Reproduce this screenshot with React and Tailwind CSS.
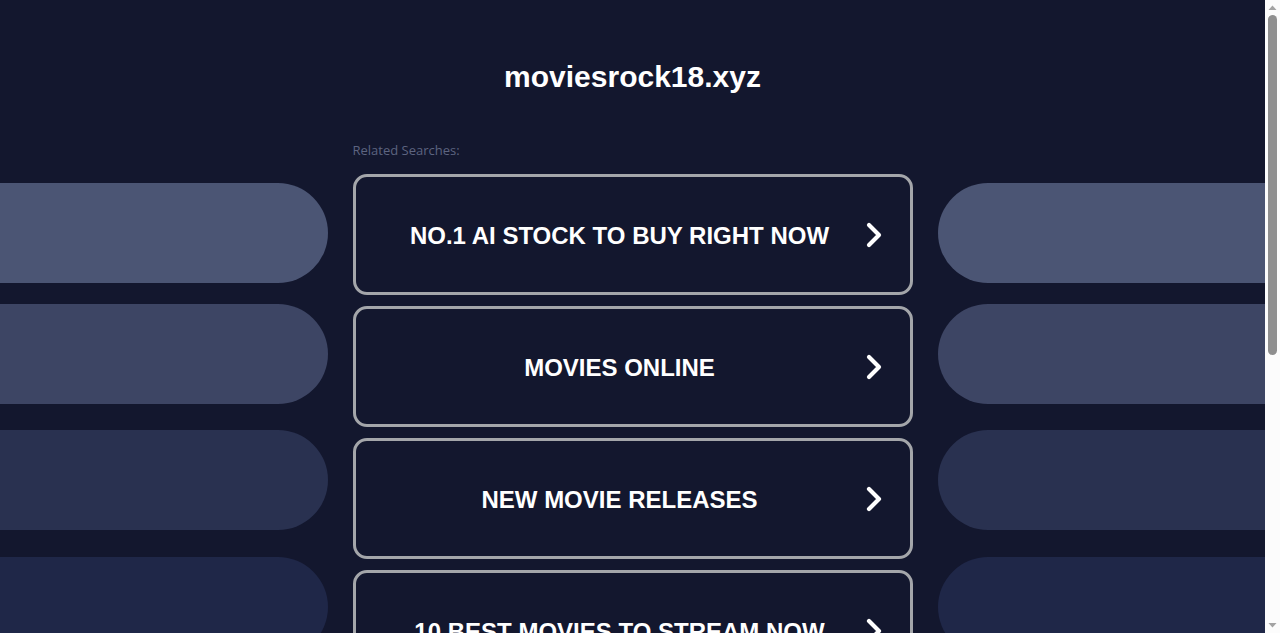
import React from "react";

const items = [
  "NO.1 AI STOCK TO BUY RIGHT NOW",
  "MOVIES ONLINE",
  "NEW MOVIE RELEASES",
  "10 BEST MOVIES TO STREAM NOW",
  "WATCH FREE MOVIES",
];

function Chevron() {
  return (
    <svg width="20" height="28" viewBox="0 0 20 28" fill="none">
      <path d="M5 4 L15 14 L5 24" stroke="white" strokeWidth="4.2" strokeLinecap="round" strokeLinejoin="round" />
    </svg>
  );
}

function Pills({ side }) {
  const r = side === "left" ? "rounded-r-full" : "rounded-l-full";
  return (
    <div className="flex-1 flex flex-col pt-[183px]">
      <div className={`h-[100px] bg-[#4b5574] ${r}`} />
      <div className={`h-[100px] mt-[21px] bg-[#3d4564] ${r}`} />
      <div className={`h-[100px] mt-[26px] bg-[#293150] ${r}`} />
      <div className={`h-[100px] mt-[27px] bg-[#1f2748] ${r}`} />
      <div className={`h-[100px] mt-[27px] bg-[#1b2242] ${r}`} />
    </div>
  );
}

function Scrollbar() {
  return (
    <div className="w-[15px] h-[633px] bg-[#fcfcfc] flex flex-col items-center shrink-0">
      <svg width="11" height="15" viewBox="0 0 11 15" className="shrink-0">
        <path d="M1.5 10 L5.5 5.5 L9.5 10 Z" fill="#a3a3a3" />
      </svg>
      <div className="w-[9px] h-[340px] rounded-full bg-[#8f8f8f]" />
      <div className="flex-1" />
      <svg width="11" height="15" viewBox="0 0 11 15" className="shrink-0">
        <path d="M1.5 5 L5.5 9.5 L9.5 5 Z" fill="#a3a3a3" />
      </svg>
    </div>
  );
}

export default function App() {
  return (
    <div className="h-[633px] overflow-hidden flex" style={{ fontFamily: '"Liberation Sans", Arial, sans-serif' }}>
      <div className="w-[1265px] shrink-0 h-[1120px] bg-[#13172e] flex">
        <Pills side="left" />
        <div className="w-[560px] mx-[25px] flex flex-col pt-[59px]">
          <h1 className="text-[30px] leading-[36px] font-bold text-white text-center">moviesrock18.xyz</h1>
          <div className="mt-[47px] text-[13px] leading-[16px] text-[#5d6480]" style={{ fontFamily: '"Open Sans", sans-serif' }}>
            Related Searches:
          </div>
          <div className="mt-[16px] flex flex-col gap-[11px]">
            {items.map((t) => (
              <div key={t} className="relative h-[121px] border-[3px] border-[#a4a6aa] rounded-[14px] flex items-center">
                <div className="w-[528px] text-center text-white font-bold text-[24px] leading-[28px] pt-[2px]">{t}</div>
                <div className="absolute right-[26px] top-1/2 -translate-y-1/2 flex">
                  <Chevron />
                </div>
              </div>
            ))}
          </div>
        </div>
        <Pills side="right" />
      </div>
      <Scrollbar />
    </div>
  );
}
